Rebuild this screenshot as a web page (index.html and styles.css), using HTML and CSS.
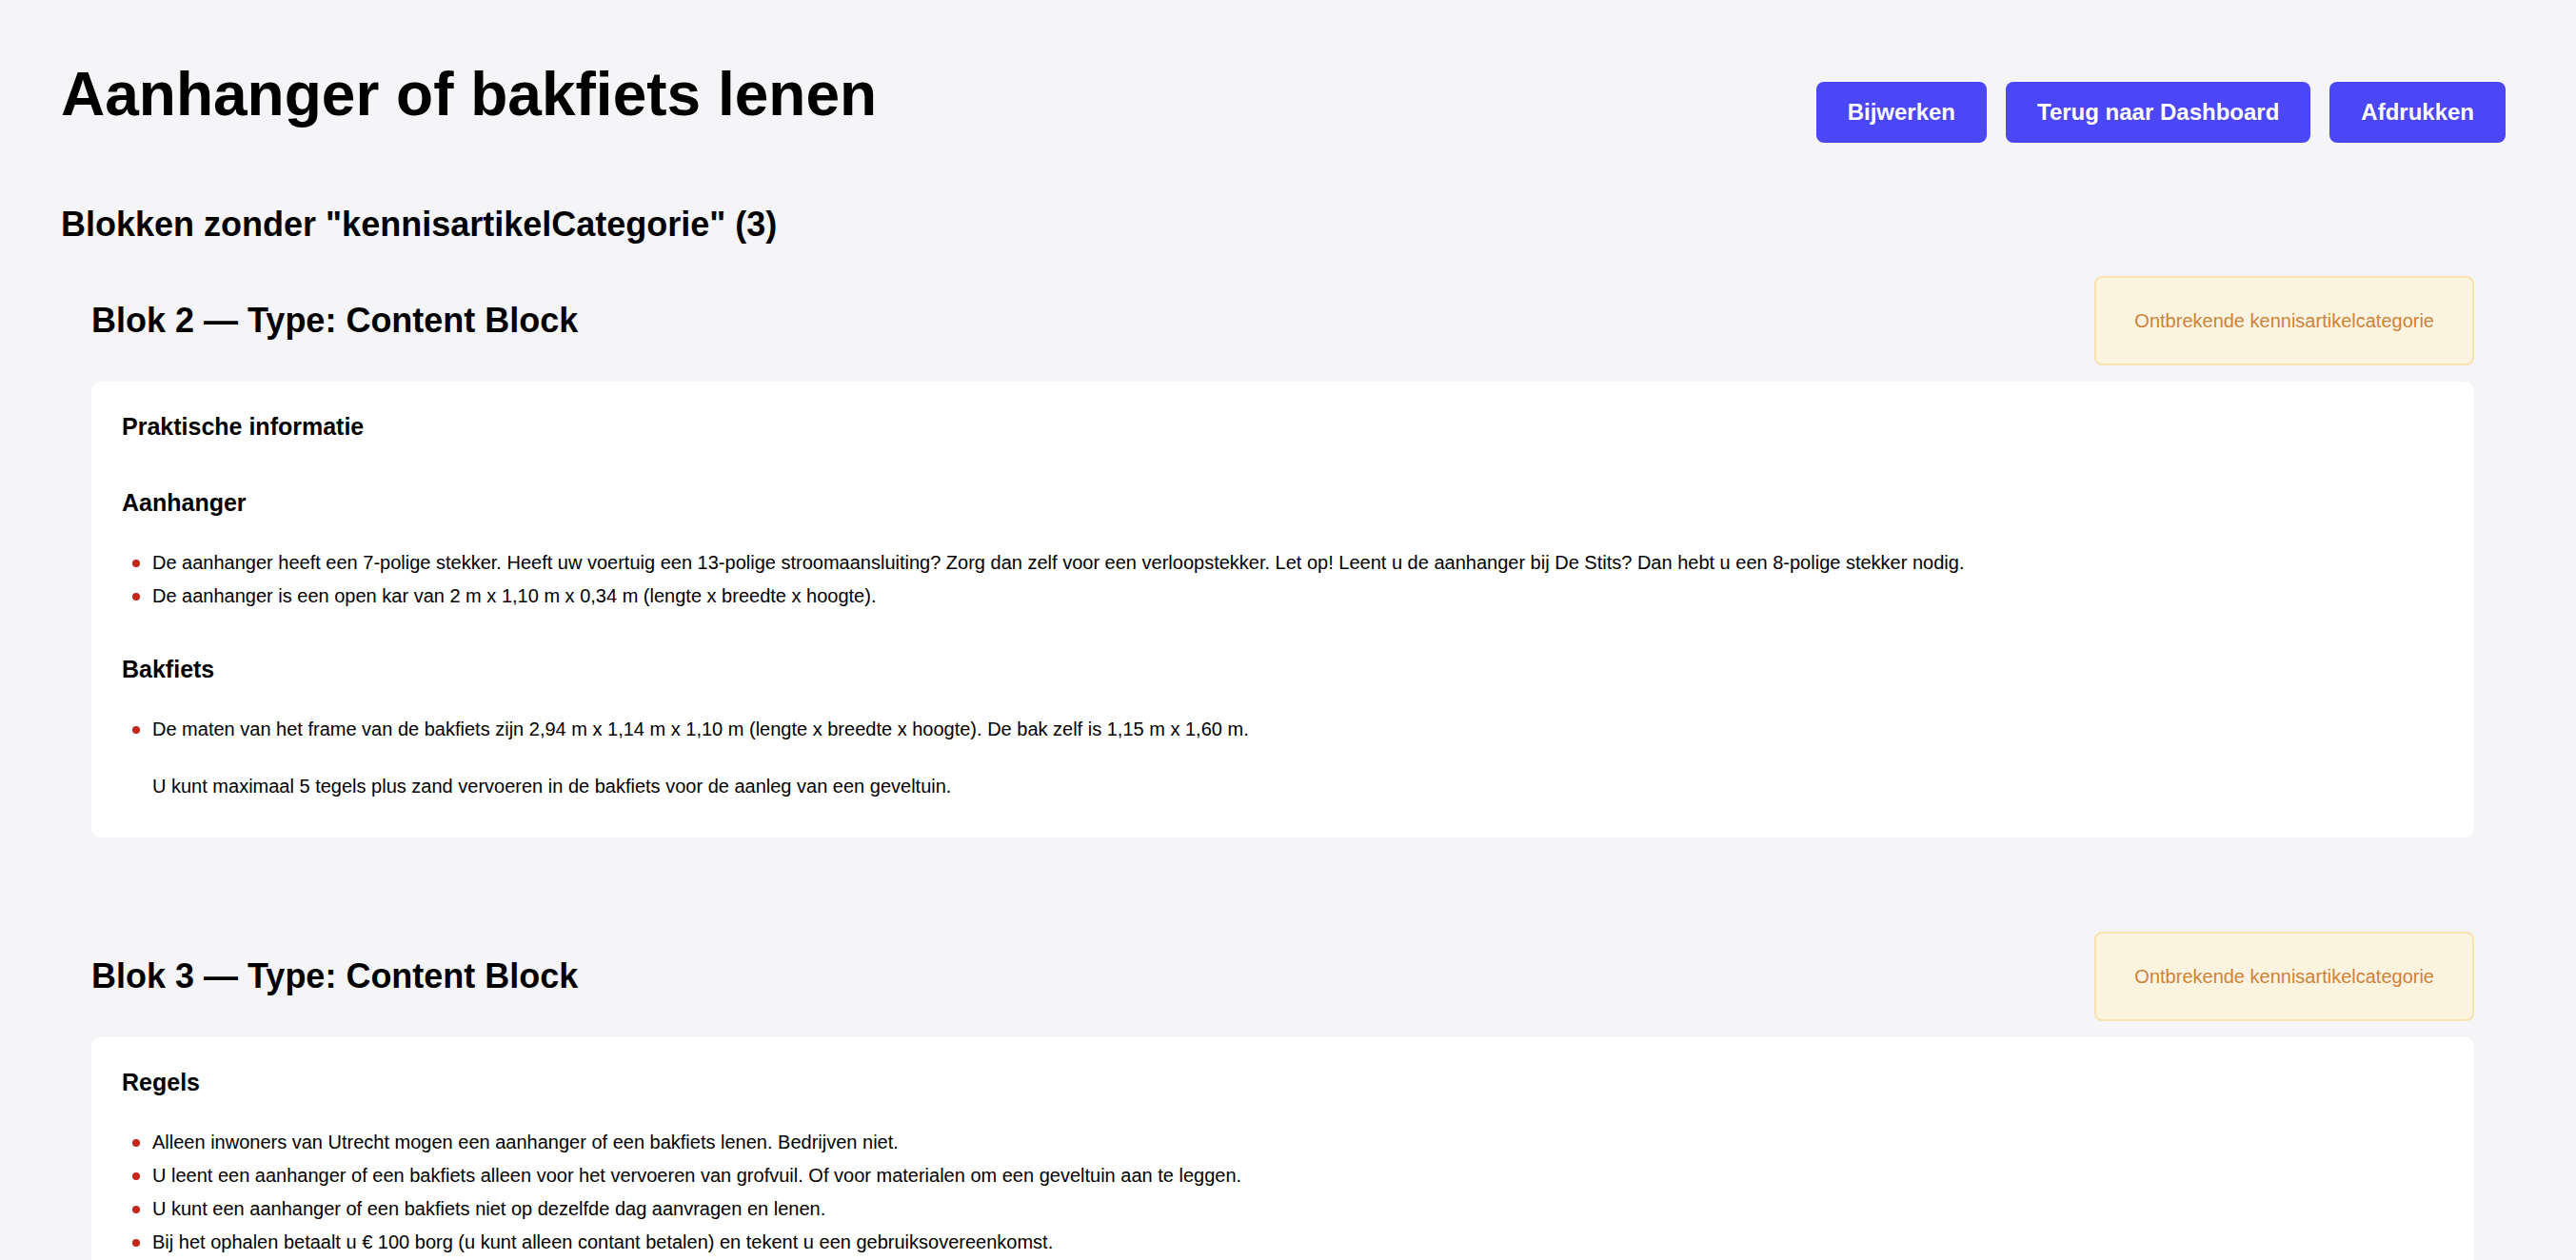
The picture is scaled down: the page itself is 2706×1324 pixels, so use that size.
FILE: index.html
```html
<!DOCTYPE html>
<html lang="nl">
<head>
    <meta charset="UTF-8">
    <meta name="viewport" content="width=device-width, initial-scale=1.0">
    <title>Aanhanger of bakfiets lenen</title>
    <link rel="stylesheet" href="styles.css">
</head>
<body>
    <div class="page">
        <div class="page-header">
            <h1>Aanhanger of bakfiets lenen</h1>
            <div class="actions">
                <button onclick="location.reload()">Bijwerken</button>
                <button onclick="history.back()">Terug naar Dashboard</button>
                <button onclick="window.print()">Afdrukken</button>
            </div>
        </div>

        <h2>Blokken zonder "kennisartikelCategorie" (3)</h2>

        <!-- blok 2 -->
        <div class="block">
            <div class="block-header">
                <h3>Blok 2 — Type: Content Block</h3>
                <span class="badge">Ontbrekende kennisartikelcategorie</span>
            </div>
            <div class="card">
                <h4 class="card-title">Praktische informatie</h4>
                <h4>Aanhanger</h4>
                <ul>
                    <li>De aanhanger heeft een 7-polige stekker. Heeft uw voertuig een 13-polige stroomaansluiting? Zorg dan zelf voor een verloopstekker. Let op! Leent u de aanhanger bij De Stits? Dan hebt u een 8-polige stekker nodig.</li>
                    <li>De aanhanger is een open kar van 2 m x 1,10 m x 0,34 m (lengte x breedte x hoogte).</li>
                </ul>
                <h4>Bakfiets</h4>
                <ul>
                    <li>De maten van het frame van de bakfiets zijn 2,94 m x 1,14 m x 1,10 m (lengte x breedte x hoogte). De bak zelf is 1,15 m x 1,60 m.<br><br>U kunt maximaal 5 tegels plus zand vervoeren in de bakfiets voor de aanleg van een geveltuin.</li>
                </ul>
            </div>
        </div>

        <!-- blok 3 -->
        <div class="block">
            <div class="block-header">
                <h3>Blok 3 — Type: Content Block</h3>
                <span class="badge">Ontbrekende kennisartikelcategorie</span>
            </div>
            <div class="card">
                <h4>Regels</h4>
                <ul>
                    <li>Alleen inwoners van Utrecht mogen een aanhanger of een bakfiets lenen. Bedrijven niet.</li>
                    <li>U leent een aanhanger of een bakfiets alleen voor het vervoeren van grofvuil. Of voor materialen om een geveltuin aan te leggen.</li>
                    <li>U kunt een aanhanger of een bakfiets niet op dezelfde dag aanvragen en lenen.</li>
                    <li>Bij het ophalen betaalt u € 100 borg (u kunt alleen contant betalen) en tekent u een gebruiksovereenkomst.</li>
                    <li>U krijgt de borg terug als u de aanhanger of bakfiets schoon en onbeschadigd terugbrengt.</li>
                </ul>
            </div>
        </div>

        <!-- blok 5 -->
        <div class="block">
            <div class="block-header">
                <h3>Blok 5 — Type: Content Block</h3>
                <span class="badge">Ontbrekende kennisartikelcategorie</span>
            </div>
            <div class="card">
                <h4>Ophalen en terugbrengen</h4>
                <ul>
                    <li>U haalt de aanhanger of bakfiets op bij het afvalscheidingsstation of bij De Stits.</li>
                    <li>U brengt de aanhanger of bakfiets dezelfde dag voor sluitingstijd terug.</li>
                </ul>
            </div>
        </div>
    </div>
</body>
</html>
```

FILE: styles.css
```css
body {
    margin: 0;
    padding: 0;
    background-color: #f5f5f7;
    font-family: 'Liberation Sans', Arial, sans-serif;
    color: #000;
}
.page {
    padding: 62px 74px 60px 64px;
}
.page-header {
    display: flex;
    justify-content: space-between;
    align-items: flex-start;
    margin-bottom: 65px;
}
h1 {
    margin: 0;
    font-size: 64px;
    font-weight: bold;
}
.actions {
    display: flex;
    gap: 20px;
    margin-top: 24px;
}
.actions button {
    font-family: inherit;
    font-size: 24px;
    font-weight: bold;
    line-height: 28px;
    padding: 18px 33px;
    border: none;
    border-radius: 8px;
    background-color: #4b46f6;
    color: white;
    cursor: pointer;
}
.actions button:hover {
    background-color: #3d38e0;
}
h2 {
    margin: 0 0 33px 0;
    font-size: 36px;
}
.block {
    margin: 0 33px 99px 32px;
}
.block-header {
    display: flex;
    justify-content: space-between;
    align-items: center;
    margin-bottom: 17px;
}
.block-header h3 {
    margin: 0;
    font-size: 36px;
}
.badge {
    padding: 30px 40px;
    line-height: 30px;
    font-size: 20px;
    color: #cf823a;
    background-color: #fcf4df;
    border: 2px solid #f7e3b1;
    border-radius: 8px;
}
.card {
    background: white;
    border-radius: 10px;
    padding: 33px 32px 39px 32px;
}
.card h4 {
    margin: 0 0 33px 0;
    font-size: 25px;
}
.card .card-title {
    margin-bottom: 51px;
}
.card ul {
    margin: 0 0 48px 0;
    padding-left: 32px;
    list-style: none;
}
.card ul:last-child {
    margin-bottom: 0;
}
.card li {
    position: relative;
    font-size: 20px;
    line-height: 30px;
}
.card li + li {
    margin-top: 5px;
}
/* rode bolletjes */
.card li::before {
    content: "";
    position: absolute;
    left: -21px;
    top: 12px;
    width: 8px;
    height: 8px;
    border-radius: 50%;
    background-color: #c4281c;
}
```
